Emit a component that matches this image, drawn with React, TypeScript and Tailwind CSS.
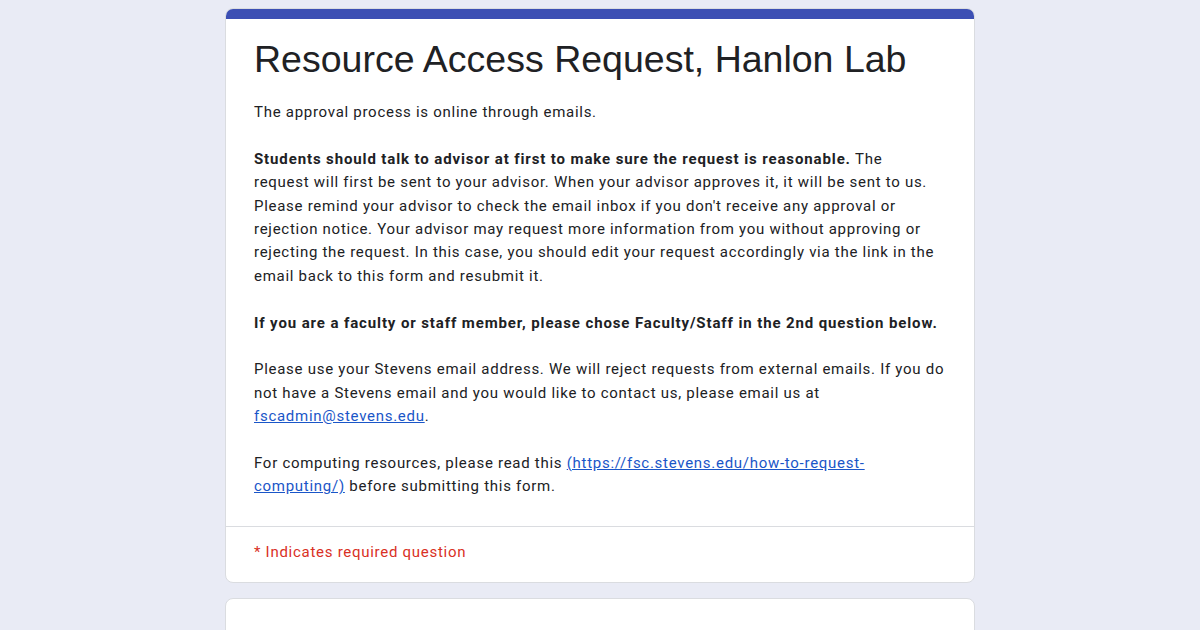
import React from 'react';

export default function App() {
  return (
    <div className="min-h-[630px] bg-[#e9ebf5] pt-2" style={{ fontFamily: 'Roboto, Arial, sans-serif' }}>
      <div className="mx-auto w-[750px]">
        {/* Title card */}
        <div className="overflow-hidden rounded-lg border border-[#dadce0] bg-white">
          <div className="h-[10px] bg-[#3c4fb4]" />
          <div className="pl-[28px] pr-[16px] pt-[18px] pb-[27px]">
            <h1
              className="text-[37.5px] leading-[44px] text-[#202124]"
              style={{ fontFamily: '"Liberation Sans", Arial, sans-serif' }}
            >
              Resource Access Request, Hanlon Lab
            </h1>
            <div className="mt-[20px] whitespace-nowrap text-[15px] leading-[23.4px] tracking-[0.72px] text-[#202124]">
              <p>The approval process is online through emails.</p>
              <p className="mt-[23.4px]">
                <span className="font-bold tracking-[0.88px]">Students should talk to advisor at first to make sure the request is reasonable.</span>{' '}
                The<br />
                request will first be sent to your advisor. When your advisor approves it, it will be sent to us.<br />
                Please remind your advisor to check the email inbox if you don't receive any approval or<br />
                rejection notice. Your advisor may request more information from you without approving or<br />
                rejecting the request. In this case, you should edit your request accordingly via the link in the<br />
                email back to this form and resubmit it.
              </p>
              <p className="mt-[23.4px] font-bold tracking-[0.88px]">
                If you are a faculty or staff member, please chose Faculty/Staff in the 2nd question below.
              </p>
              <p className="mt-[23.4px]">
                Please use your Stevens email address. We will reject requests from external emails. If you do<br />
                not have a Stevens email and you would like to contact us, please email us at<br />
                <a className="text-[#1a56c8] underline">fscadmin@stevens.edu</a>.
              </p>
              <p className="mt-[23.4px]">
                For computing resources, please read this{' '}
                <a className="text-[#1a56c8] underline">
                  (https://fsc.stevens.edu/how-to-request-<br />computing/)
                </a>{' '}
                before submitting this form.
              </p>
            </div>
          </div>
          <div className="border-t border-[#dadce0] px-[28px] pt-[14px] pb-[18px] text-[15px] leading-[23px] tracking-[0.72px] text-[#d93025]">
            * Indicates required question
          </div>
        </div>

        {/* Next card */}
        <div className="mt-[15px] h-[60px] rounded-lg border border-[#dadce0] bg-white" />
      </div>
    </div>
  );
}
